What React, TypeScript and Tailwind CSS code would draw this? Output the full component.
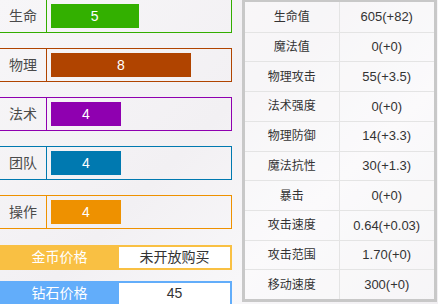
const font = { fontFamily: '"Liberation Sans", "Noto Sans CJK SC", sans-serif' };

type Stat = { label: string; value: number; border: string; bar: string };

const stats: Stat[] = [
  { label: '生命', value: 5, border: 'border-[#33ad00]', bar: 'bg-[#33b000]' },
  { label: '物理', value: 8, border: 'border-[#b04400]', bar: 'bg-[#b04400]' },
  { label: '法术', value: 4, border: 'border-[#8f00b0]', bar: 'bg-[#8f00b0]' },
  { label: '团队', value: 4, border: 'border-[#0079b0]', bar: 'bg-[#0079b0]' },
  { label: '操作', value: 4, border: 'border-[#ee9100]', bar: 'bg-[#ee9100]' },
];

const attrs: [string, string][] = [
  ['生命值', '605(+82)'],
  ['魔法值', '0(+0)'],
  ['物理攻击', '55(+3.5)'],
  ['法术强度', '0(+0)'],
  ['物理防御', '14(+3.3)'],
  ['魔法抗性', '30(+1.3)'],
  ['暴击', '0(+0)'],
  ['攻击速度', '0.64(+0.03)'],
  ['攻击范围', '1.70(+0)'],
  ['移动速度', '300(+0)'],
];

function StatBox({ stat }: { stat: Stat }) {
  return (
    <div className={`flex h-[34px] border border-l-0 ${stat.border}`}>
      <div className={`flex w-[47px] shrink-0 items-center justify-center border-r text-[14px] text-[#4a4a4a] ${stat.border}`}>
        {stat.label}
      </div>
      <div className="flex items-center pl-[4px]">
        <div
          className={`flex h-[24px] items-center justify-center text-[14px] text-white ${stat.bar}`}
          style={{ width: stat.value * 17.5 }}
        >
          {stat.value}
        </div>
      </div>
    </div>
  );
}

function PriceRow({ label, value, color }: { label: string; value: string; color: string }) {
  return (
    <div className={`flex h-[25px] p-[2px] pl-0 ${color}`}>
      <div className="flex w-[119px] items-center justify-center text-[14px] text-white">{label}</div>
      <div className="flex flex-1 items-center justify-center bg-white text-[14px] text-[#333]">{value}</div>
    </div>
  );
}

export default function App() {
  return (
    <div
      className="flex h-[304px] w-[438px] overflow-hidden bg-[linear-gradient(135deg,#f7f6f8_0%,#f2f0f3_45%,#f8f7f9_70%,#f1eff2_100%)]"
      style={font}
    >
      <div className="-mt-px flex w-[232px] shrink-0 flex-col">
        <div className="flex flex-col gap-[15px]">
          {stats.map((s) => (
            <StatBox key={s.label} stat={s} />
          ))}
        </div>
        <div className="mt-[16px] flex flex-col gap-[11px]">
          <PriceRow label="金币价格" value="未开放购买" color="bg-[#f9c043]" />
          <PriceRow label="钻石价格" value="45" color="bg-[#62adfa]" />
        </div>
      </div>

      <div className="ml-[10px] mb-[2px] flex w-[195px] flex-col border-[3px] border-t-2 border-[#c8c8c8] bg-white/40">
        {attrs.map(([name, val], i) => (
          <div
            key={name}
            className={`flex h-[30px] items-center text-[#333] ${i > 0 ? 'border-t border-[#e4e4e4]' : ''}`}
          >
            <div className="flex h-full w-1/2 items-center justify-center border-r border-[#e4e4e4] text-[12px]">{name}</div>
            <div className="flex h-full w-1/2 items-center justify-center text-[13px]">{val}</div>
          </div>
        ))}
      </div>
    </div>
  );
}
